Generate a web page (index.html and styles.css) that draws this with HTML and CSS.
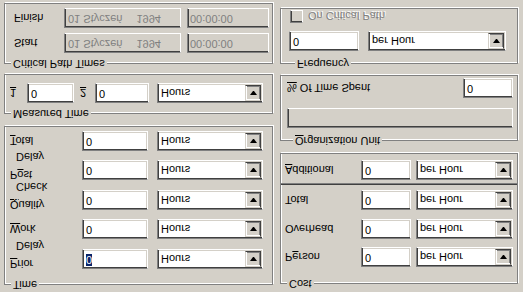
FILE: index.html
```html
<!DOCTYPE html>
<html lang="en">
<head>
    <meta charset="UTF-8">
    <meta name="viewport" content="width=device-width, initial-scale=1.0">
    <title>Task Properties</title>
    <link rel="stylesheet" href="styles.css">
</head>
<body>
    <div class="dialog">
        <div class="col col-left">
            <fieldset class="group group-time">
                <legend>Time</legend>
                <div class="rows">
                    <div class="row">
                        <label class="lbl lbl-two"><u>P</u>rior<span class="sub">Delay</span></label>
                        <span class="field num"><span class="selected">0</span></span>
                        <span class="combo"><span class="combo-text">Hours</span><span class="combo-btn"></span></span>
                    </div>
                    <div class="row">
                        <label class="lbl"><u>W</u>ork</label>
                        <span class="field num">0</span>
                        <span class="combo"><span class="combo-text">Hours</span><span class="combo-btn"></span></span>
                    </div>
                    <div class="row">
                        <label class="lbl lbl-two"><u>Q</u>uality<span class="sub">Check</span></label>
                        <span class="field num">0</span>
                        <span class="combo"><span class="combo-text">Hours</span><span class="combo-btn"></span></span>
                    </div>
                    <div class="row">
                        <label class="lbl lbl-two">P<u>o</u>st<span class="sub">Delay</span></label>
                        <span class="field num">0</span>
                        <span class="combo"><span class="combo-text">Hours</span><span class="combo-btn"></span></span>
                    </div>
                    <div class="row">
                        <label class="lbl"><u>T</u>otal</label>
                        <span class="field num">0</span>
                        <span class="combo"><span class="combo-text">Hours</span><span class="combo-btn"></span></span>
                    </div>
                </div>
            </fieldset>

            <fieldset class="group group-measured">
                <legend>Measured Time</legend>
                <div class="row">
                    <label class="lbl lbl-one"><u>1</u></label>
                    <span class="field num-one">0</span>
                    <label class="lbl lbl-two-num"><u>2</u></label>
                    <span class="field num-two">0</span>
                    <span class="combo"><span class="combo-text">Hours</span><span class="combo-btn"></span></span>
                </div>
            </fieldset>

            <fieldset class="group group-critical">
                <legend>Critical Path Times</legend>
                <div class="rows">
                    <div class="row">
                        <label class="lbl lbl-date">Start</label>
                        <span class="field disabled date"><span>01 Styczeń</span><span>1994</span></span>
                        <span class="field disabled clock">00:00:00</span>
                    </div>
                    <div class="row">
                        <label class="lbl lbl-date">Finish</label>
                        <span class="field disabled date"><span>01 Styczeń</span><span>1994</span></span>
                        <span class="field disabled clock">00:00:00</span>
                    </div>
                </div>
            </fieldset>
        </div>

        <div class="col col-right">
            <fieldset class="group group-cost">
                <legend>Cost</legend>
                <div class="rows">
                    <div class="row">
                        <label class="lbl lbl-cost">P<u>e</u>rson</label>
                        <span class="field cost">0</span>
                        <span class="combo combo-cost"><span class="combo-text">per Hour</span><span class="combo-btn"></span></span>
                    </div>
                    <div class="row row-overhead">
                        <label class="lbl lbl-cost">Overhead</label>
                        <span class="field cost">0</span>
                        <span class="combo combo-cost"><span class="combo-text">per Hour</span><span class="combo-btn"></span></span>
                    </div>
                    <div class="row row-total">
                        <label class="lbl lbl-cost">Total</label>
                        <span class="field cost">0</span>
                        <span class="combo combo-cost"><span class="combo-text">per Hour</span><span class="combo-btn"></span></span>
                    </div>
                    <div class="separator"></div>
                    <div class="row row-additional">
                        <label class="lbl lbl-cost"><u>A</u>dditional</label>
                        <span class="field cost">0</span>
                        <span class="combo combo-cost"><span class="combo-text">per Hour</span><span class="combo-btn"></span></span>
                    </div>
                </div>
            </fieldset>

            <fieldset class="group group-org">
                <legend><u>O</u>rganization Unit</legend>
                <span class="field disabled wide"></span>
                <div class="row row-spent">
                    <label class="lbl lbl-spent"><u>%</u> Of Time Spent</label>
                    <span class="field cost">0</span>
                </div>
            </fieldset>

            <fieldset class="group group-freq">
                <legend>Frequency</legend>
                <div class="row">
                    <span class="field freq">0</span>
                    <span class="combo combo-freq"><span class="combo-text">per Hour</span><span class="combo-btn"></span></span>
                </div>
                <div class="row row-check">
                    <span class="checkbox"></span>
                    <span class="check-text">On Critical Path</span>
                </div>
            </fieldset>
        </div>
    </div>
</body>
</html>
```

FILE: styles.css
```css
body {
    margin: 0;
    background-color: #d4d0c8;
    font-family: 'Liberation Sans', Arial, sans-serif;
    font-size: 11px;
    color: #000;
}

/* the whole dialog is shown upside down */
.dialog {
    display: flex;
    gap: 7px;
    width: 523px;
    height: 292px;
    padding-left: 4px;
    box-sizing: border-box;
    transform: scaleY(-1);
}

.col {
    display: flex;
    flex-direction: column;
}

.col-left {
    width: 269px;
    padding-top: 1px;
}

.col-right {
    width: 238px;
    padding-top: 2px;
}

.group {
    margin: 0;
    padding: 0;
    min-width: 0;
    border: 1px solid #808080;
    box-shadow: inset 1px 1px #fff, 1px 1px #fff;
}

legend {
    margin-left: 6px;
    padding: 0 2px;
    line-height: 13px;
    background-color: #d4d0c8;
}

.rows {
    display: flex;
    flex-direction: column;
}

.row {
    display: flex;
    align-items: center;
    height: 20px;
}

.lbl {
    flex-shrink: 0;
    white-space: nowrap;
}

.field {
    box-sizing: border-box;
    height: 20px;
    padding-left: 3px;
    line-height: 16px;
    background-color: #fff;
    border: 1px solid;
    border-color: #808080 #fff #fff #808080;
    box-shadow: inset 1px 1px #404040, inset -1px -1px #d4d0c8;
    white-space: nowrap;
}

.field.disabled {
    background-color: #d4d0c8;
    color: #808080;
}

.selected {
    background-color: #0a246a;
    color: #fff;
}

.combo {
    box-sizing: border-box;
    display: flex;
    align-items: center;
    height: 20px;
    padding: 1px;
    background-color: #fff;
    border: 1px solid;
    border-color: #808080 #fff #fff #808080;
    box-shadow: inset 1px 1px #404040, inset -1px -1px #d4d0c8;
}

.combo-text {
    flex: 1;
    padding-left: 2px;
    white-space: nowrap;
}

.combo-btn {
    box-sizing: border-box;
    display: flex;
    align-items: center;
    justify-content: center;
    width: 16px;
    height: 16px;
    background-color: #d4d0c8;
    border: 1px solid;
    border-color: #d4d0c8 #404040 #404040 #d4d0c8;
    box-shadow: inset 1px 1px #fff, inset -1px -1px #808080;
}

.combo-btn::after {
    content: "";
    width: 1px;
    border-top: 4px solid #000;
    border-left: 3px solid transparent;
    border-right: 3px solid transparent;
}

/* Time */
.group-time .rows {
    padding: 9px 0 4px 5px;
    gap: 9.5px;
}

.group-time .lbl {
    width: 72px;
}

.lbl-two {
    align-self: flex-start;
    margin-top: -4px;
    line-height: 18px;
}

.sub {
    display: block;
    padding-left: 6px;
}

.group-time .num {
    width: 66px;
}

.group-time .combo,
.group-measured .combo {
    width: 106px;
    margin-left: 9px;
}

/* Measured Time */
.group-measured {
    margin-top: 6px;
}

.group-measured .row {
    padding: 4px 0 8px 5px;
}

.lbl-one {
    width: 17px;
}

.num-one {
    width: 47px;
}

.lbl-two-num {
    width: 15px;
    margin-left: 6px;
}

.num-two {
    width: 54px;
}

.group-measured .combo {
    margin-left: 8px;
}

/* Critical Path Times */
.group-critical {
    margin-top: 4px;
}

.group-critical .rows {
    padding: 4px 0 4px 9px;
    gap: 5px;
}

.lbl-date {
    width: 50px;
}

.date {
    display: flex;
    gap: 14px;
    width: 117px;
}

.clock {
    width: 82px;
    margin-left: 6px;
    padding-left: 2px;
}

/* Cost */
.group-cost .rows {
    padding: 10px 0 6px 4px;
}

.row-overhead {
    margin-top: 8px;
}

.row-total {
    margin-top: 9px;
}

.row-additional {
    margin-top: 3px;
}

.lbl-cost {
    width: 76px;
}

.field.cost {
    width: 50px;
}

.combo-cost {
    width: 97px;
    margin-left: 5px;
}

.separator {
    margin: 5px 0 0 -4px;
    border-top: 1px solid #404040;
    border-bottom: 1px solid #808080;
}

/* Organization Unit */
.group-org {
    margin-top: 6px;
    padding: 6px 4px 2px 6px;
}

.wide {
    display: block;
    width: 226px;
}

.row-spent {
    margin-top: 10px;
}

.lbl-spent {
    flex: 1;
}

/* Frequency */
.group-freq {
    margin-top: 5px;
    padding: 6px 0 0 8px;
}

.field.freq {
    width: 70px;
}

.combo-freq {
    width: 138px;
    margin-left: 9px;
}

.row-check {
    margin-top: 7px;
    height: 15px;
    padding-left: 1px;
}

.checkbox {
    box-sizing: border-box;
    width: 13px;
    height: 13px;
    background-color: #d4d0c8;
    border: 1px solid;
    border-color: #808080 #fff #fff #808080;
    box-shadow: inset 1px 1px #404040, inset -1px -1px #d4d0c8;
}

.check-text {
    margin-left: 5px;
    color: #808080;
    text-shadow: 1px 1px #fff;
}
```
